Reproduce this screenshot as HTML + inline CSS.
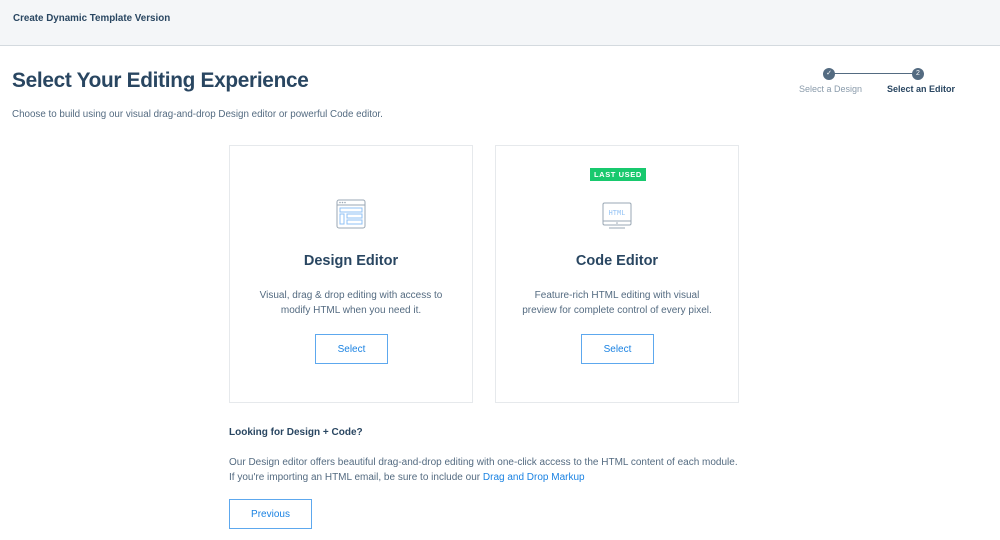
<!DOCTYPE html>
<html><head><style>
*{margin:0;padding:0;box-sizing:border-box}
body{width:1000px;height:540px;overflow:hidden;background:#fff;font-family:"Liberation Sans",sans-serif;color:#294661;position:relative}
.top{position:absolute;left:0;top:0;width:1000px;height:46px;background:#f4f6f8;border-bottom:1px solid #d4dadf}
.top span{position:absolute;left:13px;top:13px;font-size:9.8px;font-weight:bold;color:#294661}
h1{position:absolute;left:12px;top:69px;font-size:20.8px;font-weight:bold;color:#294661;letter-spacing:-0.3px}
.sub{position:absolute;left:12px;top:109px;font-size:9.8px;color:#546b81}
.card{position:absolute;top:145px;width:244px;height:258px;border:1px solid #e6e9ec;text-align:center}
.card h2{position:absolute;top:107px;width:100%;font-size:14.5px;font-weight:bold}
.card p{position:absolute;top:142px;width:100%;font-size:10px;line-height:15px;color:#546b81}
.btn{position:absolute;border:1px solid #5da8ee;color:#1a82e2;font-size:10px;display:flex;align-items:center;justify-content:center;background:#fff}
.badge{position:absolute;left:94px;top:22px;background:#18c96e;color:#fff;font-size:7.5px;font-weight:bold;padding:2px 4px;letter-spacing:.6px}
.t{position:absolute;font-size:10px;color:#546b81}
.dot{position:absolute;top:68px;width:12px;height:12px;border-radius:50%;background:#546b81;color:#fff;font-size:7px;text-align:center;line-height:12px}
</style></head><body>
<div class="top"><span>Create Dynamic Template Version</span></div>
<h1>Select Your Editing Experience</h1>
<div class="sub">Choose to build using our visual drag-and-drop Design editor or powerful Code editor.</div>
<div style="position:absolute;left:830px;top:73px;width:88px;height:1px;background:#546b81"></div>
<div class="dot" style="left:823px">✓</div>
<div class="dot" style="left:912px">2</div>
<div class="t" style="left:799px;top:84px;font-size:9px;color:#8a9bab">Select a Design</div>
<div class="t" style="left:887px;top:84px;font-size:9px;font-weight:bold;color:#294661">Select an Editor</div>

<div class="card" style="left:229px">
<svg style="position:absolute;left:106px;top:53px" width="30" height="30" viewBox="0 0 30 30"><rect x="1" y="1" width="28" height="28" rx="2" fill="none" stroke="#9aa7b4" stroke-width="1"/><line x1="1" y1="6" x2="29" y2="6" stroke="#9aa7b4"/><circle cx="4" cy="3.5" r=".8" fill="#9aa7b4"/><circle cx="6.5" cy="3.5" r=".8" fill="#9aa7b4"/><circle cx="9" cy="3.5" r=".8" fill="#9aa7b4"/><rect x="4" y="9" width="22" height="4" fill="none" stroke="#8fc0f5"/><rect x="4" y="15" width="4" height="10" fill="none" stroke="#8fc0f5"/><rect x="11" y="15" width="15" height="4" fill="none" stroke="#8fc0f5"/><rect x="11" y="21" width="15" height="4" fill="none" stroke="#8fc0f5"/></svg>
<h2>Design Editor</h2>
<p>Visual, drag &amp; drop editing with access to<br>modify HTML when you need it.</p>
<div class="btn" style="left:85px;top:188px;width:73px;height:30px">Select</div>
</div>
<div class="card" style="left:495px">
<div class="badge">LAST USED</div>
<svg style="position:absolute;left:106px;top:56px" width="30" height="27" viewBox="0 0 30 27"><rect x="1" y="1" width="28" height="22" rx="1.5" fill="none" stroke="#9aa7b4"/><line x1="1" y1="19" x2="29" y2="19" stroke="#9aa7b4"/><circle cx="15" cy="21" r=".8" fill="#9aa7b4"/><line x1="7" y1="26" x2="23" y2="26" stroke="#9aa7b4"/><text x="15" y="13" font-size="7" text-anchor="middle" fill="#8fc0f5" font-family="Liberation Mono">HTML</text></svg>
<h2>Code Editor</h2>
<p>Feature-rich HTML editing with visual<br>preview for complete control of every pixel.</p>
<div class="btn" style="left:85px;top:188px;width:73px;height:30px">Select</div>
</div>

<div class="t" style="left:229px;top:427px;font-weight:bold;color:#294661">Looking for Design + Code?</div>
<div class="t" style="left:229px;top:455px;line-height:15px">Our Design editor offers beautiful drag-and-drop editing with one-click access to the HTML content of each module.<br>If you're importing an HTML email, be sure to include our <span style="color:#1a82e2">Drag and Drop Markup</span></div>
<div class="btn" style="left:229px;top:499px;width:83px;height:30px">Previous</div>
</body></html>
